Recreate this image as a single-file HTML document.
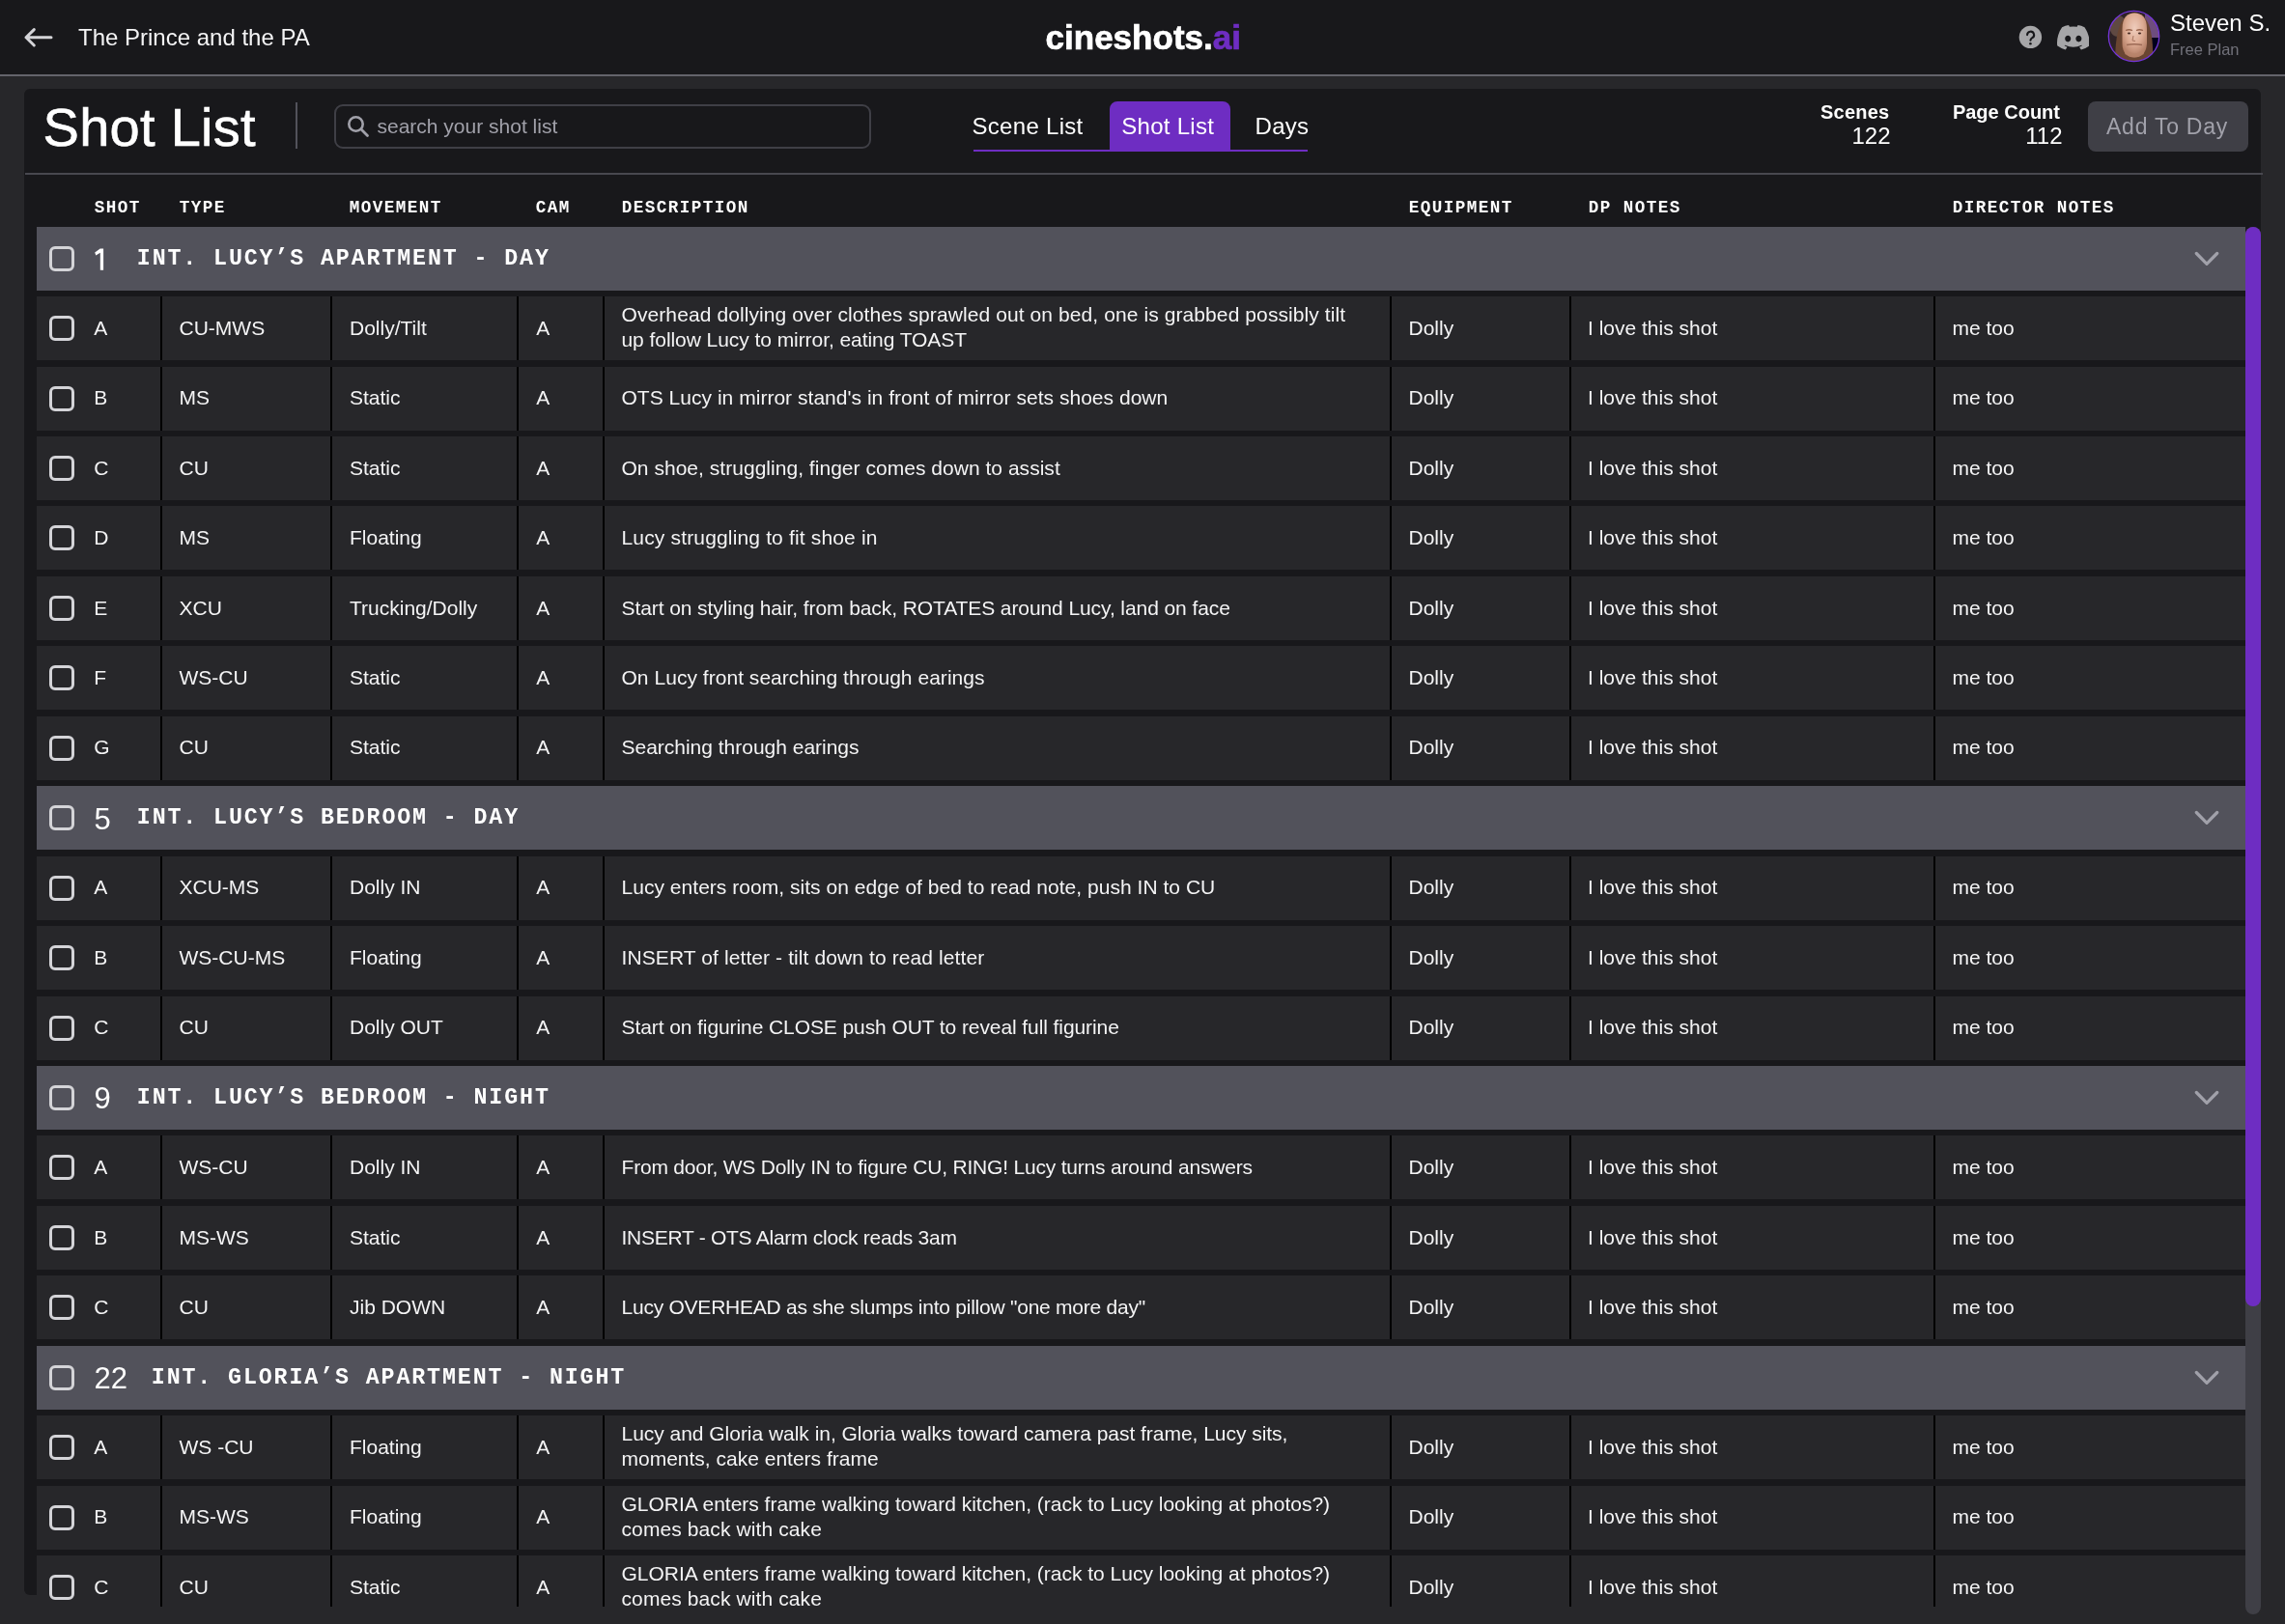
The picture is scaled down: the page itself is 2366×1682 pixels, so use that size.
<!DOCTYPE html>
<html><head><meta charset="utf-8"><title>Shot List</title>
<style>
html,body{margin:0;padding:0;}
body{width:2366px;height:1682px;overflow:hidden;background:#27272a;position:relative;font-family:"Liberation Sans", sans-serif;color:#f4f4f5;}
#root{position:absolute;left:0;top:0;width:2366px;height:1682px;overflow:hidden;background:#27272a;will-change:transform;}
.r{position:absolute;}
.t{position:absolute;white-space:pre;line-height:1;}
.S{font-family:"Liberation Sans", sans-serif;}
.M{font-family:"Liberation Mono", monospace;}
.chk{position:absolute;width:26px;height:26px;box-sizing:border-box;border:3px solid #d4d4d8;border-radius:6px;}
.clip{position:absolute;left:0;top:0;width:2366px;height:1663.5px;overflow:hidden;}
</style></head><body>
<div id="root"><div class="r" style="left:0.00px;top:0.00px;width:2366.00px;height:77.00px;background:#18181b;"></div>
<div class="r" style="left:0.00px;top:77.00px;width:2366.00px;height:2.00px;background:#64646b;"></div>
<svg class="r" style="left:22px;top:26px" width="36" height="26" viewBox="0 0 36 26"><path d="M31 12.8H5M13.3 4.6L5 12.8L13.3 21" fill="none" stroke="#d4d4d8" stroke-width="3" stroke-linecap="round" stroke-linejoin="round"/></svg>
<div class="t S" style="left:81.00px;top:26.98px;font-size:24px;">The Prince and the PA</div>
<div class="t S" style="left:1082.50px;top:20.57px;font-size:35px;font-weight:bold;color:#ffffff;letter-spacing:0.02px;-webkit-text-stroke:0.7px #ffffff;">cineshots.<span style="color:#6e2dc2;-webkit-text-stroke:0.7px #6e2dc2">ai</span></div>
<svg class="r" style="left:2090px;top:26px" width="25" height="25" viewBox="0 0 25 25"><circle cx="12.4" cy="12.4" r="11.7" fill="#a6a6a8"/><path d="M9.1 10.1a3.5 3.5 0 1 1 5.2 3.1c-1 .6-1.6 1.2-1.9 2.6" fill="none" stroke="#18181b" stroke-width="2.1" stroke-linecap="round"/><circle cx="12.4" cy="19.2" r="1.3" fill="#18181b"/></svg>
<svg class="r" style="left:2129.8px;top:26px" width="33.6" height="25.6" viewBox="0 0 127.14 96.36" preserveAspectRatio="none"><path fill="#a6a6a8" d="M107.7,8.07A105.15,105.15,0,0,0,81.47,0a72.06,72.06,0,0,0-3.36,6.83A97.68,97.68,0,0,0,49,6.83,72.37,72.37,0,0,0,45.64,0,105.89,105.89,0,0,0,19.39,8.09C2.79,32.65-1.71,56.6.54,80.21h0A105.73,105.73,0,0,0,32.71,96.36,77.7,77.7,0,0,0,39.6,85.25a68.42,68.42,0,0,1-10.85-5.18c.91-.66,1.8-1.34,2.66-2a75.57,75.57,0,0,0,64.32,0c.87.71,1.76,1.39,2.66,2a68.68,68.68,0,0,1-10.87,5.19,77,77,0,0,0,6.89,11.1A105.25,105.25,0,0,0,126.6,80.22h0C129.24,52.84,122.09,29.11,107.7,8.07ZM42.45,65.69C36.18,65.69,31,60,31,53s5-12.74,11.43-12.74S54,46,53.89,53,48.84,65.69,42.45,65.69Zm42.24,0C78.41,65.69,73.25,60,73.25,53s5-12.74,11.44-12.74S96.23,46,96.12,53,91.08,65.69,84.69,65.69Z"/></svg>
<svg class="r" style="left:2182px;top:10px" width="55" height="55" viewBox="0 0 55 55"><defs><clipPath id="avc"><circle cx="27.5" cy="27.5" r="26"/></clipPath><radialGradient id="fg" cx="50%" cy="35%" r="65%"><stop offset="0" stop-color="#efcdbd"/><stop offset="0.55" stop-color="#dcaa92"/><stop offset="1" stop-color="#b07a62"/></radialGradient><filter id="avb" x="-10%" y="-10%" width="120%" height="120%"><feGaussianBlur stdDeviation="0.7"/></filter></defs><g clip-path="url(#avc)"><g filter="url(#avb)"><rect x="-2" y="-2" width="59" height="59" fill="#2e2426"/><ellipse cx="11" cy="17" rx="9" ry="11" fill="#5e4843"/><rect x="39" y="-2" width="18" height="31" fill="#6e4d7e"/><rect x="41" y="29" width="16" height="28" fill="#06031c"/><path d="M8 57 C8 30 11 5 28 3 C45 4 48 28 47 57 Z" fill="#6b4530"/><path d="M15.5 20 C15.5 8 21 3.5 28 3.5 C35.5 3.5 41 8 41 20 L41 35 C40.5 45 35 49.5 28 49.5 C21 49.5 15.5 45 15.5 35 Z" fill="url(#fg)"/><path d="M19 21.5 Q22.5 20 26 21.5 M30 21.5 Q33.5 20 37 21.5" stroke="#9a654e" stroke-width="1.3" fill="none"/><ellipse cx="22.5" cy="24.5" rx="1.6" ry="1" fill="#4a2e26"/><ellipse cx="33.5" cy="24.5" rx="1.6" ry="1" fill="#4a2e26"/><path d="M27 27 L26 32 L29 32.5" stroke="#a8745f" stroke-width="1" fill="none"/><path d="M20 36.5 Q28 35 36 36.5" stroke="#9c6a55" stroke-width="1.4" fill="none"/><path d="M18 40 Q28 50 38 40 L38 46 Q28 53 18 46 Z" fill="#b8836a" opacity="0.6"/></g></g><circle cx="27.5" cy="27.5" r="26.2" fill="none" stroke="#7435d8" stroke-width="1.3"/></svg>
<div class="t S" style="left:2247.00px;top:11.78px;font-size:24px;color:#ffffff;">Steven S.</div>
<div class="t S" style="left:2247.00px;top:43.03px;font-size:16.5px;color:#71717a;">Free Plan</div>
<div class="r" style="left:25.00px;top:92.00px;width:2316.00px;height:1560.00px;background:#18181b;border-radius:6px;"></div>
<div class="t S" style="left:44.50px;top:103.60px;font-size:56px;color:#ffffff;letter-spacing:0.28px;-webkit-text-stroke:0.6px #ffffff;">Shot List</div>
<div class="r" style="left:306.00px;top:106.00px;width:2.00px;height:48.00px;background:#52525b;"></div>
<div class="r" style="left:346.00px;top:108.30px;width:555.50px;height:45.30px;background:transparent;box-sizing:border-box;border:2px solid #3f3f46;border-radius:9px;"></div>
<svg class="r" style="left:358px;top:118px" width="26" height="26" viewBox="0 0 26 26"><circle cx="10.5" cy="10.5" r="7.2" fill="none" stroke="#a1a1aa" stroke-width="2.6"/><path d="M15.8 15.8L22.5 22.5" stroke="#a1a1aa" stroke-width="2.8" stroke-linecap="round"/></svg>
<div class="t S" style="left:390.50px;top:120.12px;font-size:21px;color:#a1a1aa;">search your shot list</div>
<div class="r" style="left:1149.00px;top:104.50px;width:125.20px;height:52.00px;background:#6e2dc2;border-radius:8px 8px 0 0;"></div>
<div class="r" style="left:1007.50px;top:155.00px;width:346.00px;height:2.00px;background:#6e2dc2;"></div>
<div class="t S" style="left:1006.50px;top:118.88px;font-size:24px;color:#ffffff;letter-spacing:0.3px;">Scene List</div>
<div class="t S" style="left:1161.20px;top:118.88px;font-size:24px;color:#ffffff;letter-spacing:0.3px;">Shot List</div>
<div class="t S" style="left:1299.50px;top:118.88px;font-size:24px;color:#ffffff;letter-spacing:0.3px;">Days</div>
<div class="t S" style="left:1956.50px;top:106.27px;font-size:20px;font-weight:bold;color:#ffffff;transform:translateX(-100%);letter-spacing:0.25px;">Scenes</div>
<div class="t S" style="left:1957.50px;top:128.98px;font-size:24px;color:#ffffff;transform:translateX(-100%);">122</div>
<div class="t S" style="left:2133.00px;top:106.27px;font-size:20px;font-weight:bold;color:#ffffff;transform:translateX(-100%);">Page Count</div>
<div class="t S" style="left:2135.50px;top:128.98px;font-size:24px;color:#ffffff;transform:translateX(-100%);">112</div>
<div class="r" style="left:2161.60px;top:105.00px;width:166.30px;height:52.00px;background:#3f3f46;border-radius:8px;"></div>
<div class="t S" style="left:2181.00px;top:119.73px;font-size:23px;color:#a1a1aa;letter-spacing:0.75px;">Add To Day</div>
<div class="r" style="left:26.00px;top:179.00px;width:2317.00px;height:2.00px;background:#48484f;"></div>
<div class="t M" style="left:97.70px;top:206.71px;font-size:17.6px;font-weight:bold;color:#ffffff;letter-spacing:1.44px;">SHOT</div>
<div class="t M" style="left:185.70px;top:206.71px;font-size:17.6px;font-weight:bold;color:#ffffff;letter-spacing:1.44px;">TYPE</div>
<div class="t M" style="left:361.70px;top:206.71px;font-size:17.6px;font-weight:bold;color:#ffffff;letter-spacing:1.44px;">MOVEMENT</div>
<div class="t M" style="left:554.70px;top:206.71px;font-size:17.6px;font-weight:bold;color:#ffffff;letter-spacing:1.44px;">CAM</div>
<div class="t M" style="left:643.70px;top:206.71px;font-size:17.6px;font-weight:bold;color:#ffffff;letter-spacing:1.44px;">DESCRIPTION</div>
<div class="t M" style="left:1458.70px;top:206.71px;font-size:17.6px;font-weight:bold;color:#ffffff;letter-spacing:1.44px;">EQUIPMENT</div>
<div class="t M" style="left:1644.70px;top:206.71px;font-size:17.6px;font-weight:bold;color:#ffffff;letter-spacing:1.44px;">DP NOTES</div>
<div class="t M" style="left:2021.70px;top:206.71px;font-size:17.6px;font-weight:bold;color:#ffffff;letter-spacing:1.44px;">DIRECTOR NOTES</div>
<div class="clip">
<div class="r" style="left:38.00px;top:234.60px;width:2286.50px;height:66.00px;background:#52525b;"></div>
<div class="chk" style="left:51px;top:254.60px"></div>
<svg class="r" style="left:90px;top:249.60px" width="25" height="35" viewBox="0 0 25 35"><path d="M17.1 7.5V29.7H13.8V11.7L9.3 14.6L8.2 11.5L13.7 7.5Z" fill="#ffffff"/></svg>
<div class="t M" style="left:141.80px;top:256.84px;font-size:23.3px;font-weight:bold;color:#ffffff;letter-spacing:1.87px;">INT. LUCY’S APARTMENT - DAY</div>
<svg class="r" style="left:2271px;top:258.60px" width="28" height="18" viewBox="0 0 28 18"><path d="M3.3 3.5L14 14.3L24.7 3.5" fill="none" stroke="#a1a1aa" stroke-width="3.2" stroke-linecap="round" stroke-linejoin="round"/></svg>
<div class="r" style="left:38.00px;top:307.05px;width:2286.50px;height:66.00px;background:#27272a;"></div>
<div class="r" style="left:166.00px;top:307.05px;width:2.00px;height:66.00px;background:#000000;"></div>
<div class="r" style="left:342.00px;top:307.05px;width:2.00px;height:66.00px;background:#000000;"></div>
<div class="r" style="left:535.00px;top:307.05px;width:2.00px;height:66.00px;background:#000000;"></div>
<div class="r" style="left:624.00px;top:307.05px;width:2.00px;height:66.00px;background:#000000;"></div>
<div class="r" style="left:1439.00px;top:307.05px;width:2.00px;height:66.00px;background:#000000;"></div>
<div class="r" style="left:1625.00px;top:307.05px;width:2.00px;height:66.00px;background:#000000;"></div>
<div class="r" style="left:2002.00px;top:307.05px;width:2.00px;height:66.00px;background:#000000;"></div>
<div class="chk" style="left:51px;top:327.05px"></div>
<div class="t S" style="left:97.30px;top:328.77px;font-size:21px;">A</div>
<div class="t S" style="left:185.50px;top:328.77px;font-size:21px;">CU-MWS</div>
<div class="t S" style="left:362.00px;top:328.77px;font-size:21px;">Dolly/Tilt</div>
<div class="t S" style="left:555.30px;top:328.77px;font-size:21px;">A</div>
<div class="t S" style="left:643.50px;top:315.07px;font-size:21px;letter-spacing:0.091px;">Overhead dollying over clothes sprawled out on bed, one is grabbed possibly tilt</div>
<div class="t S" style="left:643.50px;top:341.27px;font-size:21px;letter-spacing:-0.062px;">up follow Lucy to mirror, eating TOAST</div>
<div class="t S" style="left:1458.50px;top:328.77px;font-size:21px;">Dolly</div>
<div class="t S" style="left:1644.00px;top:328.77px;font-size:21px;">I love this shot</div>
<div class="t S" style="left:2021.50px;top:328.77px;font-size:21px;">me too</div>
<div class="r" style="left:38.00px;top:379.50px;width:2286.50px;height:66.00px;background:#27272a;"></div>
<div class="r" style="left:166.00px;top:379.50px;width:2.00px;height:66.00px;background:#000000;"></div>
<div class="r" style="left:342.00px;top:379.50px;width:2.00px;height:66.00px;background:#000000;"></div>
<div class="r" style="left:535.00px;top:379.50px;width:2.00px;height:66.00px;background:#000000;"></div>
<div class="r" style="left:624.00px;top:379.50px;width:2.00px;height:66.00px;background:#000000;"></div>
<div class="r" style="left:1439.00px;top:379.50px;width:2.00px;height:66.00px;background:#000000;"></div>
<div class="r" style="left:1625.00px;top:379.50px;width:2.00px;height:66.00px;background:#000000;"></div>
<div class="r" style="left:2002.00px;top:379.50px;width:2.00px;height:66.00px;background:#000000;"></div>
<div class="chk" style="left:51px;top:399.50px"></div>
<div class="t S" style="left:97.30px;top:401.22px;font-size:21px;">B</div>
<div class="t S" style="left:185.50px;top:401.22px;font-size:21px;">MS</div>
<div class="t S" style="left:362.00px;top:401.22px;font-size:21px;">Static</div>
<div class="t S" style="left:555.30px;top:401.22px;font-size:21px;">A</div>
<div class="t S" style="left:643.50px;top:401.22px;font-size:21px;letter-spacing:0.025px;">OTS Lucy in mirror stand's in front of mirror sets shoes down</div>
<div class="t S" style="left:1458.50px;top:401.22px;font-size:21px;">Dolly</div>
<div class="t S" style="left:1644.00px;top:401.22px;font-size:21px;">I love this shot</div>
<div class="t S" style="left:2021.50px;top:401.22px;font-size:21px;">me too</div>
<div class="r" style="left:38.00px;top:451.95px;width:2286.50px;height:66.00px;background:#27272a;"></div>
<div class="r" style="left:166.00px;top:451.95px;width:2.00px;height:66.00px;background:#000000;"></div>
<div class="r" style="left:342.00px;top:451.95px;width:2.00px;height:66.00px;background:#000000;"></div>
<div class="r" style="left:535.00px;top:451.95px;width:2.00px;height:66.00px;background:#000000;"></div>
<div class="r" style="left:624.00px;top:451.95px;width:2.00px;height:66.00px;background:#000000;"></div>
<div class="r" style="left:1439.00px;top:451.95px;width:2.00px;height:66.00px;background:#000000;"></div>
<div class="r" style="left:1625.00px;top:451.95px;width:2.00px;height:66.00px;background:#000000;"></div>
<div class="r" style="left:2002.00px;top:451.95px;width:2.00px;height:66.00px;background:#000000;"></div>
<div class="chk" style="left:51px;top:471.95px"></div>
<div class="t S" style="left:97.30px;top:473.67px;font-size:21px;">C</div>
<div class="t S" style="left:185.50px;top:473.67px;font-size:21px;">CU</div>
<div class="t S" style="left:362.00px;top:473.67px;font-size:21px;">Static</div>
<div class="t S" style="left:555.30px;top:473.67px;font-size:21px;">A</div>
<div class="t S" style="left:643.50px;top:473.67px;font-size:21px;letter-spacing:0.028px;">On shoe, struggling, finger comes down to assist</div>
<div class="t S" style="left:1458.50px;top:473.67px;font-size:21px;">Dolly</div>
<div class="t S" style="left:1644.00px;top:473.67px;font-size:21px;">I love this shot</div>
<div class="t S" style="left:2021.50px;top:473.67px;font-size:21px;">me too</div>
<div class="r" style="left:38.00px;top:524.40px;width:2286.50px;height:66.00px;background:#27272a;"></div>
<div class="r" style="left:166.00px;top:524.40px;width:2.00px;height:66.00px;background:#000000;"></div>
<div class="r" style="left:342.00px;top:524.40px;width:2.00px;height:66.00px;background:#000000;"></div>
<div class="r" style="left:535.00px;top:524.40px;width:2.00px;height:66.00px;background:#000000;"></div>
<div class="r" style="left:624.00px;top:524.40px;width:2.00px;height:66.00px;background:#000000;"></div>
<div class="r" style="left:1439.00px;top:524.40px;width:2.00px;height:66.00px;background:#000000;"></div>
<div class="r" style="left:1625.00px;top:524.40px;width:2.00px;height:66.00px;background:#000000;"></div>
<div class="r" style="left:2002.00px;top:524.40px;width:2.00px;height:66.00px;background:#000000;"></div>
<div class="chk" style="left:51px;top:544.40px"></div>
<div class="t S" style="left:97.30px;top:546.12px;font-size:21px;">D</div>
<div class="t S" style="left:185.50px;top:546.12px;font-size:21px;">MS</div>
<div class="t S" style="left:362.00px;top:546.12px;font-size:21px;">Floating</div>
<div class="t S" style="left:555.30px;top:546.12px;font-size:21px;">A</div>
<div class="t S" style="left:643.50px;top:546.12px;font-size:21px;letter-spacing:0.159px;">Lucy struggling to fit shoe in</div>
<div class="t S" style="left:1458.50px;top:546.12px;font-size:21px;">Dolly</div>
<div class="t S" style="left:1644.00px;top:546.12px;font-size:21px;">I love this shot</div>
<div class="t S" style="left:2021.50px;top:546.12px;font-size:21px;">me too</div>
<div class="r" style="left:38.00px;top:596.85px;width:2286.50px;height:66.00px;background:#27272a;"></div>
<div class="r" style="left:166.00px;top:596.85px;width:2.00px;height:66.00px;background:#000000;"></div>
<div class="r" style="left:342.00px;top:596.85px;width:2.00px;height:66.00px;background:#000000;"></div>
<div class="r" style="left:535.00px;top:596.85px;width:2.00px;height:66.00px;background:#000000;"></div>
<div class="r" style="left:624.00px;top:596.85px;width:2.00px;height:66.00px;background:#000000;"></div>
<div class="r" style="left:1439.00px;top:596.85px;width:2.00px;height:66.00px;background:#000000;"></div>
<div class="r" style="left:1625.00px;top:596.85px;width:2.00px;height:66.00px;background:#000000;"></div>
<div class="r" style="left:2002.00px;top:596.85px;width:2.00px;height:66.00px;background:#000000;"></div>
<div class="chk" style="left:51px;top:616.85px"></div>
<div class="t S" style="left:97.30px;top:618.57px;font-size:21px;">E</div>
<div class="t S" style="left:185.50px;top:618.57px;font-size:21px;">XCU</div>
<div class="t S" style="left:362.00px;top:618.57px;font-size:21px;">Trucking/Dolly</div>
<div class="t S" style="left:555.30px;top:618.57px;font-size:21px;">A</div>
<div class="t S" style="left:643.50px;top:618.57px;font-size:21px;letter-spacing:-0.088px;">Start on styling hair, from back, ROTATES around Lucy, land on face</div>
<div class="t S" style="left:1458.50px;top:618.57px;font-size:21px;">Dolly</div>
<div class="t S" style="left:1644.00px;top:618.57px;font-size:21px;">I love this shot</div>
<div class="t S" style="left:2021.50px;top:618.57px;font-size:21px;">me too</div>
<div class="r" style="left:38.00px;top:669.30px;width:2286.50px;height:66.00px;background:#27272a;"></div>
<div class="r" style="left:166.00px;top:669.30px;width:2.00px;height:66.00px;background:#000000;"></div>
<div class="r" style="left:342.00px;top:669.30px;width:2.00px;height:66.00px;background:#000000;"></div>
<div class="r" style="left:535.00px;top:669.30px;width:2.00px;height:66.00px;background:#000000;"></div>
<div class="r" style="left:624.00px;top:669.30px;width:2.00px;height:66.00px;background:#000000;"></div>
<div class="r" style="left:1439.00px;top:669.30px;width:2.00px;height:66.00px;background:#000000;"></div>
<div class="r" style="left:1625.00px;top:669.30px;width:2.00px;height:66.00px;background:#000000;"></div>
<div class="r" style="left:2002.00px;top:669.30px;width:2.00px;height:66.00px;background:#000000;"></div>
<div class="chk" style="left:51px;top:689.30px"></div>
<div class="t S" style="left:97.30px;top:691.02px;font-size:21px;">F</div>
<div class="t S" style="left:185.50px;top:691.02px;font-size:21px;">WS-CU</div>
<div class="t S" style="left:362.00px;top:691.02px;font-size:21px;">Static</div>
<div class="t S" style="left:555.30px;top:691.02px;font-size:21px;">A</div>
<div class="t S" style="left:643.50px;top:691.02px;font-size:21px;letter-spacing:0.034px;">On Lucy front searching through earings</div>
<div class="t S" style="left:1458.50px;top:691.02px;font-size:21px;">Dolly</div>
<div class="t S" style="left:1644.00px;top:691.02px;font-size:21px;">I love this shot</div>
<div class="t S" style="left:2021.50px;top:691.02px;font-size:21px;">me too</div>
<div class="r" style="left:38.00px;top:741.75px;width:2286.50px;height:66.00px;background:#27272a;"></div>
<div class="r" style="left:166.00px;top:741.75px;width:2.00px;height:66.00px;background:#000000;"></div>
<div class="r" style="left:342.00px;top:741.75px;width:2.00px;height:66.00px;background:#000000;"></div>
<div class="r" style="left:535.00px;top:741.75px;width:2.00px;height:66.00px;background:#000000;"></div>
<div class="r" style="left:624.00px;top:741.75px;width:2.00px;height:66.00px;background:#000000;"></div>
<div class="r" style="left:1439.00px;top:741.75px;width:2.00px;height:66.00px;background:#000000;"></div>
<div class="r" style="left:1625.00px;top:741.75px;width:2.00px;height:66.00px;background:#000000;"></div>
<div class="r" style="left:2002.00px;top:741.75px;width:2.00px;height:66.00px;background:#000000;"></div>
<div class="chk" style="left:51px;top:761.75px"></div>
<div class="t S" style="left:97.30px;top:763.47px;font-size:21px;">G</div>
<div class="t S" style="left:185.50px;top:763.47px;font-size:21px;">CU</div>
<div class="t S" style="left:362.00px;top:763.47px;font-size:21px;">Static</div>
<div class="t S" style="left:555.30px;top:763.47px;font-size:21px;">A</div>
<div class="t S" style="left:643.50px;top:763.47px;font-size:21px;letter-spacing:-0.012px;">Searching through earings</div>
<div class="t S" style="left:1458.50px;top:763.47px;font-size:21px;">Dolly</div>
<div class="t S" style="left:1644.00px;top:763.47px;font-size:21px;">I love this shot</div>
<div class="t S" style="left:2021.50px;top:763.47px;font-size:21px;">me too</div>
<div class="r" style="left:38.00px;top:814.20px;width:2286.50px;height:66.00px;background:#52525b;"></div>
<div class="chk" style="left:51px;top:834.20px"></div>
<div class="t S" style="left:97.50px;top:832.56px;font-size:31px;color:#ffffff;">5</div>
<div class="t M" style="left:141.80px;top:836.44px;font-size:23.3px;font-weight:bold;color:#ffffff;letter-spacing:1.87px;">INT. LUCY’S BEDROOM - DAY</div>
<svg class="r" style="left:2271px;top:838.20px" width="28" height="18" viewBox="0 0 28 18"><path d="M3.3 3.5L14 14.3L24.7 3.5" fill="none" stroke="#a1a1aa" stroke-width="3.2" stroke-linecap="round" stroke-linejoin="round"/></svg>
<div class="r" style="left:38.00px;top:886.65px;width:2286.50px;height:66.00px;background:#27272a;"></div>
<div class="r" style="left:166.00px;top:886.65px;width:2.00px;height:66.00px;background:#000000;"></div>
<div class="r" style="left:342.00px;top:886.65px;width:2.00px;height:66.00px;background:#000000;"></div>
<div class="r" style="left:535.00px;top:886.65px;width:2.00px;height:66.00px;background:#000000;"></div>
<div class="r" style="left:624.00px;top:886.65px;width:2.00px;height:66.00px;background:#000000;"></div>
<div class="r" style="left:1439.00px;top:886.65px;width:2.00px;height:66.00px;background:#000000;"></div>
<div class="r" style="left:1625.00px;top:886.65px;width:2.00px;height:66.00px;background:#000000;"></div>
<div class="r" style="left:2002.00px;top:886.65px;width:2.00px;height:66.00px;background:#000000;"></div>
<div class="chk" style="left:51px;top:906.65px"></div>
<div class="t S" style="left:97.30px;top:908.37px;font-size:21px;">A</div>
<div class="t S" style="left:185.50px;top:908.37px;font-size:21px;">XCU-MS</div>
<div class="t S" style="left:362.00px;top:908.37px;font-size:21px;">Dolly IN</div>
<div class="t S" style="left:555.30px;top:908.37px;font-size:21px;">A</div>
<div class="t S" style="left:643.50px;top:908.37px;font-size:21px;letter-spacing:0.030px;">Lucy enters room, sits on edge of bed to read note, push IN to CU</div>
<div class="t S" style="left:1458.50px;top:908.37px;font-size:21px;">Dolly</div>
<div class="t S" style="left:1644.00px;top:908.37px;font-size:21px;">I love this shot</div>
<div class="t S" style="left:2021.50px;top:908.37px;font-size:21px;">me too</div>
<div class="r" style="left:38.00px;top:959.10px;width:2286.50px;height:66.00px;background:#27272a;"></div>
<div class="r" style="left:166.00px;top:959.10px;width:2.00px;height:66.00px;background:#000000;"></div>
<div class="r" style="left:342.00px;top:959.10px;width:2.00px;height:66.00px;background:#000000;"></div>
<div class="r" style="left:535.00px;top:959.10px;width:2.00px;height:66.00px;background:#000000;"></div>
<div class="r" style="left:624.00px;top:959.10px;width:2.00px;height:66.00px;background:#000000;"></div>
<div class="r" style="left:1439.00px;top:959.10px;width:2.00px;height:66.00px;background:#000000;"></div>
<div class="r" style="left:1625.00px;top:959.10px;width:2.00px;height:66.00px;background:#000000;"></div>
<div class="r" style="left:2002.00px;top:959.10px;width:2.00px;height:66.00px;background:#000000;"></div>
<div class="chk" style="left:51px;top:979.10px"></div>
<div class="t S" style="left:97.30px;top:980.82px;font-size:21px;">B</div>
<div class="t S" style="left:185.50px;top:980.82px;font-size:21px;">WS-CU-MS</div>
<div class="t S" style="left:362.00px;top:980.82px;font-size:21px;">Floating</div>
<div class="t S" style="left:555.30px;top:980.82px;font-size:21px;">A</div>
<div class="t S" style="left:643.50px;top:980.82px;font-size:21px;letter-spacing:0.098px;">INSERT of letter - tilt down to read letter</div>
<div class="t S" style="left:1458.50px;top:980.82px;font-size:21px;">Dolly</div>
<div class="t S" style="left:1644.00px;top:980.82px;font-size:21px;">I love this shot</div>
<div class="t S" style="left:2021.50px;top:980.82px;font-size:21px;">me too</div>
<div class="r" style="left:38.00px;top:1031.55px;width:2286.50px;height:66.00px;background:#27272a;"></div>
<div class="r" style="left:166.00px;top:1031.55px;width:2.00px;height:66.00px;background:#000000;"></div>
<div class="r" style="left:342.00px;top:1031.55px;width:2.00px;height:66.00px;background:#000000;"></div>
<div class="r" style="left:535.00px;top:1031.55px;width:2.00px;height:66.00px;background:#000000;"></div>
<div class="r" style="left:624.00px;top:1031.55px;width:2.00px;height:66.00px;background:#000000;"></div>
<div class="r" style="left:1439.00px;top:1031.55px;width:2.00px;height:66.00px;background:#000000;"></div>
<div class="r" style="left:1625.00px;top:1031.55px;width:2.00px;height:66.00px;background:#000000;"></div>
<div class="r" style="left:2002.00px;top:1031.55px;width:2.00px;height:66.00px;background:#000000;"></div>
<div class="chk" style="left:51px;top:1051.55px"></div>
<div class="t S" style="left:97.30px;top:1053.27px;font-size:21px;">C</div>
<div class="t S" style="left:185.50px;top:1053.27px;font-size:21px;">CU</div>
<div class="t S" style="left:362.00px;top:1053.27px;font-size:21px;">Dolly OUT</div>
<div class="t S" style="left:555.30px;top:1053.27px;font-size:21px;">A</div>
<div class="t S" style="left:643.50px;top:1053.27px;font-size:21px;letter-spacing:-0.089px;">Start on figurine CLOSE push OUT to reveal full figurine</div>
<div class="t S" style="left:1458.50px;top:1053.27px;font-size:21px;">Dolly</div>
<div class="t S" style="left:1644.00px;top:1053.27px;font-size:21px;">I love this shot</div>
<div class="t S" style="left:2021.50px;top:1053.27px;font-size:21px;">me too</div>
<div class="r" style="left:38.00px;top:1104.00px;width:2286.50px;height:66.00px;background:#52525b;"></div>
<div class="chk" style="left:51px;top:1124.00px"></div>
<div class="t S" style="left:97.50px;top:1122.36px;font-size:31px;color:#ffffff;">9</div>
<div class="t M" style="left:141.80px;top:1126.24px;font-size:23.3px;font-weight:bold;color:#ffffff;letter-spacing:1.87px;">INT. LUCY’S BEDROOM - NIGHT</div>
<svg class="r" style="left:2271px;top:1128.00px" width="28" height="18" viewBox="0 0 28 18"><path d="M3.3 3.5L14 14.3L24.7 3.5" fill="none" stroke="#a1a1aa" stroke-width="3.2" stroke-linecap="round" stroke-linejoin="round"/></svg>
<div class="r" style="left:38.00px;top:1176.45px;width:2286.50px;height:66.00px;background:#27272a;"></div>
<div class="r" style="left:166.00px;top:1176.45px;width:2.00px;height:66.00px;background:#000000;"></div>
<div class="r" style="left:342.00px;top:1176.45px;width:2.00px;height:66.00px;background:#000000;"></div>
<div class="r" style="left:535.00px;top:1176.45px;width:2.00px;height:66.00px;background:#000000;"></div>
<div class="r" style="left:624.00px;top:1176.45px;width:2.00px;height:66.00px;background:#000000;"></div>
<div class="r" style="left:1439.00px;top:1176.45px;width:2.00px;height:66.00px;background:#000000;"></div>
<div class="r" style="left:1625.00px;top:1176.45px;width:2.00px;height:66.00px;background:#000000;"></div>
<div class="r" style="left:2002.00px;top:1176.45px;width:2.00px;height:66.00px;background:#000000;"></div>
<div class="chk" style="left:51px;top:1196.45px"></div>
<div class="t S" style="left:97.30px;top:1198.17px;font-size:21px;">A</div>
<div class="t S" style="left:185.50px;top:1198.17px;font-size:21px;">WS-CU</div>
<div class="t S" style="left:362.00px;top:1198.17px;font-size:21px;">Dolly IN</div>
<div class="t S" style="left:555.30px;top:1198.17px;font-size:21px;">A</div>
<div class="t S" style="left:643.50px;top:1198.17px;font-size:21px;letter-spacing:-0.193px;">From door, WS Dolly IN to figure CU, RING! Lucy turns around answers</div>
<div class="t S" style="left:1458.50px;top:1198.17px;font-size:21px;">Dolly</div>
<div class="t S" style="left:1644.00px;top:1198.17px;font-size:21px;">I love this shot</div>
<div class="t S" style="left:2021.50px;top:1198.17px;font-size:21px;">me too</div>
<div class="r" style="left:38.00px;top:1248.90px;width:2286.50px;height:66.00px;background:#27272a;"></div>
<div class="r" style="left:166.00px;top:1248.90px;width:2.00px;height:66.00px;background:#000000;"></div>
<div class="r" style="left:342.00px;top:1248.90px;width:2.00px;height:66.00px;background:#000000;"></div>
<div class="r" style="left:535.00px;top:1248.90px;width:2.00px;height:66.00px;background:#000000;"></div>
<div class="r" style="left:624.00px;top:1248.90px;width:2.00px;height:66.00px;background:#000000;"></div>
<div class="r" style="left:1439.00px;top:1248.90px;width:2.00px;height:66.00px;background:#000000;"></div>
<div class="r" style="left:1625.00px;top:1248.90px;width:2.00px;height:66.00px;background:#000000;"></div>
<div class="r" style="left:2002.00px;top:1248.90px;width:2.00px;height:66.00px;background:#000000;"></div>
<div class="chk" style="left:51px;top:1268.90px"></div>
<div class="t S" style="left:97.30px;top:1270.62px;font-size:21px;">B</div>
<div class="t S" style="left:185.50px;top:1270.62px;font-size:21px;">MS-WS</div>
<div class="t S" style="left:362.00px;top:1270.62px;font-size:21px;">Static</div>
<div class="t S" style="left:555.30px;top:1270.62px;font-size:21px;">A</div>
<div class="t S" style="left:643.50px;top:1270.62px;font-size:21px;letter-spacing:-0.270px;">INSERT - OTS Alarm clock reads 3am</div>
<div class="t S" style="left:1458.50px;top:1270.62px;font-size:21px;">Dolly</div>
<div class="t S" style="left:1644.00px;top:1270.62px;font-size:21px;">I love this shot</div>
<div class="t S" style="left:2021.50px;top:1270.62px;font-size:21px;">me too</div>
<div class="r" style="left:38.00px;top:1321.35px;width:2286.50px;height:66.00px;background:#27272a;"></div>
<div class="r" style="left:166.00px;top:1321.35px;width:2.00px;height:66.00px;background:#000000;"></div>
<div class="r" style="left:342.00px;top:1321.35px;width:2.00px;height:66.00px;background:#000000;"></div>
<div class="r" style="left:535.00px;top:1321.35px;width:2.00px;height:66.00px;background:#000000;"></div>
<div class="r" style="left:624.00px;top:1321.35px;width:2.00px;height:66.00px;background:#000000;"></div>
<div class="r" style="left:1439.00px;top:1321.35px;width:2.00px;height:66.00px;background:#000000;"></div>
<div class="r" style="left:1625.00px;top:1321.35px;width:2.00px;height:66.00px;background:#000000;"></div>
<div class="r" style="left:2002.00px;top:1321.35px;width:2.00px;height:66.00px;background:#000000;"></div>
<div class="chk" style="left:51px;top:1341.35px"></div>
<div class="t S" style="left:97.30px;top:1343.07px;font-size:21px;">C</div>
<div class="t S" style="left:185.50px;top:1343.07px;font-size:21px;">CU</div>
<div class="t S" style="left:362.00px;top:1343.07px;font-size:21px;">Jib DOWN</div>
<div class="t S" style="left:555.30px;top:1343.07px;font-size:21px;">A</div>
<div class="t S" style="left:643.50px;top:1343.07px;font-size:21px;letter-spacing:-0.238px;">Lucy OVERHEAD as she slumps into pillow "one more day"</div>
<div class="t S" style="left:1458.50px;top:1343.07px;font-size:21px;">Dolly</div>
<div class="t S" style="left:1644.00px;top:1343.07px;font-size:21px;">I love this shot</div>
<div class="t S" style="left:2021.50px;top:1343.07px;font-size:21px;">me too</div>
<div class="r" style="left:38.00px;top:1393.80px;width:2286.50px;height:66.00px;background:#52525b;"></div>
<div class="chk" style="left:51px;top:1413.80px"></div>
<div class="t S" style="left:97.50px;top:1412.16px;font-size:31px;color:#ffffff;">22</div>
<div class="t M" style="left:156.80px;top:1416.04px;font-size:23.3px;font-weight:bold;color:#ffffff;letter-spacing:1.87px;">INT. GLORIA’S APARTMENT - NIGHT</div>
<svg class="r" style="left:2271px;top:1417.80px" width="28" height="18" viewBox="0 0 28 18"><path d="M3.3 3.5L14 14.3L24.7 3.5" fill="none" stroke="#a1a1aa" stroke-width="3.2" stroke-linecap="round" stroke-linejoin="round"/></svg>
<div class="r" style="left:38.00px;top:1466.25px;width:2286.50px;height:66.00px;background:#27272a;"></div>
<div class="r" style="left:166.00px;top:1466.25px;width:2.00px;height:66.00px;background:#000000;"></div>
<div class="r" style="left:342.00px;top:1466.25px;width:2.00px;height:66.00px;background:#000000;"></div>
<div class="r" style="left:535.00px;top:1466.25px;width:2.00px;height:66.00px;background:#000000;"></div>
<div class="r" style="left:624.00px;top:1466.25px;width:2.00px;height:66.00px;background:#000000;"></div>
<div class="r" style="left:1439.00px;top:1466.25px;width:2.00px;height:66.00px;background:#000000;"></div>
<div class="r" style="left:1625.00px;top:1466.25px;width:2.00px;height:66.00px;background:#000000;"></div>
<div class="r" style="left:2002.00px;top:1466.25px;width:2.00px;height:66.00px;background:#000000;"></div>
<div class="chk" style="left:51px;top:1486.25px"></div>
<div class="t S" style="left:97.30px;top:1487.97px;font-size:21px;">A</div>
<div class="t S" style="left:185.50px;top:1487.97px;font-size:21px;">WS -CU</div>
<div class="t S" style="left:362.00px;top:1487.97px;font-size:21px;">Floating</div>
<div class="t S" style="left:555.30px;top:1487.97px;font-size:21px;">A</div>
<div class="t S" style="left:643.50px;top:1474.27px;font-size:21px;letter-spacing:-0.030px;">Lucy and Gloria walk in, Gloria walks toward camera past frame, Lucy sits,</div>
<div class="t S" style="left:643.50px;top:1500.47px;font-size:21px;">moments, cake enters frame</div>
<div class="t S" style="left:1458.50px;top:1487.97px;font-size:21px;">Dolly</div>
<div class="t S" style="left:1644.00px;top:1487.97px;font-size:21px;">I love this shot</div>
<div class="t S" style="left:2021.50px;top:1487.97px;font-size:21px;">me too</div>
<div class="r" style="left:38.00px;top:1538.70px;width:2286.50px;height:66.00px;background:#27272a;"></div>
<div class="r" style="left:166.00px;top:1538.70px;width:2.00px;height:66.00px;background:#000000;"></div>
<div class="r" style="left:342.00px;top:1538.70px;width:2.00px;height:66.00px;background:#000000;"></div>
<div class="r" style="left:535.00px;top:1538.70px;width:2.00px;height:66.00px;background:#000000;"></div>
<div class="r" style="left:624.00px;top:1538.70px;width:2.00px;height:66.00px;background:#000000;"></div>
<div class="r" style="left:1439.00px;top:1538.70px;width:2.00px;height:66.00px;background:#000000;"></div>
<div class="r" style="left:1625.00px;top:1538.70px;width:2.00px;height:66.00px;background:#000000;"></div>
<div class="r" style="left:2002.00px;top:1538.70px;width:2.00px;height:66.00px;background:#000000;"></div>
<div class="chk" style="left:51px;top:1558.70px"></div>
<div class="t S" style="left:97.30px;top:1560.42px;font-size:21px;">B</div>
<div class="t S" style="left:185.50px;top:1560.42px;font-size:21px;">MS-WS</div>
<div class="t S" style="left:362.00px;top:1560.42px;font-size:21px;">Floating</div>
<div class="t S" style="left:555.30px;top:1560.42px;font-size:21px;">A</div>
<div class="t S" style="left:643.50px;top:1546.72px;font-size:21px;letter-spacing:-0.008px;">GLORIA enters frame walking toward kitchen, (rack to Lucy looking at photos?)</div>
<div class="t S" style="left:643.50px;top:1572.92px;font-size:21px;letter-spacing:0.100px;">comes back with cake</div>
<div class="t S" style="left:1458.50px;top:1560.42px;font-size:21px;">Dolly</div>
<div class="t S" style="left:1644.00px;top:1560.42px;font-size:21px;">I love this shot</div>
<div class="t S" style="left:2021.50px;top:1560.42px;font-size:21px;">me too</div>
<div class="r" style="left:38.00px;top:1611.15px;width:2286.50px;height:66.00px;background:#27272a;"></div>
<div class="r" style="left:166.00px;top:1611.15px;width:2.00px;height:66.00px;background:#000000;"></div>
<div class="r" style="left:342.00px;top:1611.15px;width:2.00px;height:66.00px;background:#000000;"></div>
<div class="r" style="left:535.00px;top:1611.15px;width:2.00px;height:66.00px;background:#000000;"></div>
<div class="r" style="left:624.00px;top:1611.15px;width:2.00px;height:66.00px;background:#000000;"></div>
<div class="r" style="left:1439.00px;top:1611.15px;width:2.00px;height:66.00px;background:#000000;"></div>
<div class="r" style="left:1625.00px;top:1611.15px;width:2.00px;height:66.00px;background:#000000;"></div>
<div class="r" style="left:2002.00px;top:1611.15px;width:2.00px;height:66.00px;background:#000000;"></div>
<div class="chk" style="left:51px;top:1631.15px"></div>
<div class="t S" style="left:97.30px;top:1632.87px;font-size:21px;">C</div>
<div class="t S" style="left:185.50px;top:1632.87px;font-size:21px;">CU</div>
<div class="t S" style="left:362.00px;top:1632.87px;font-size:21px;">Static</div>
<div class="t S" style="left:555.30px;top:1632.87px;font-size:21px;">A</div>
<div class="t S" style="left:643.50px;top:1619.17px;font-size:21px;letter-spacing:-0.008px;">GLORIA enters frame walking toward kitchen, (rack to Lucy looking at photos?)</div>
<div class="t S" style="left:643.50px;top:1645.37px;font-size:21px;letter-spacing:0.100px;">comes back with cake</div>
<div class="t S" style="left:1458.50px;top:1632.87px;font-size:21px;">Dolly</div>
<div class="t S" style="left:1644.00px;top:1632.87px;font-size:21px;">I love this shot</div>
<div class="t S" style="left:2021.50px;top:1632.87px;font-size:21px;">me too</div>
</div>
<div class="r" style="left:2324.80px;top:235.00px;width:16.20px;height:1437.00px;background:#3f3f46;border-radius:8px;"></div>
<div class="r" style="left:2324.80px;top:235.00px;width:16.20px;height:1118.00px;background:#6e2dc2;border-radius:8px;"></div>
</div></body></html>
